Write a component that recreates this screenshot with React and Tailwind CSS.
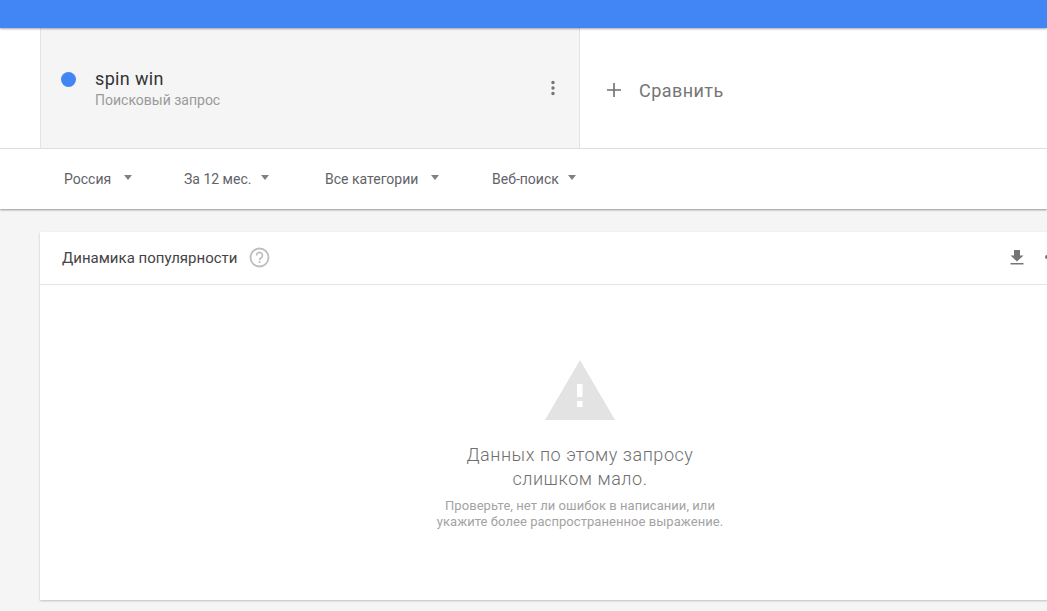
const font = { fontFamily: 'Roboto, "Liberation Sans", sans-serif' };

function Filter({ label, width, margin }) {
  return (
    <button className={`flex items-center justify-between text-[14px] leading-4 text-[#5f6368] ${width} ${margin}`}>
      <span>{label}</span>
      <span className="mr-[1px] mt-[-3px] h-0 w-0 border-x-[4.5px] border-t-[5px] border-x-transparent border-t-[#808080]" />
    </button>
  );
}

export default function App() {
  return (
    <div style={font} className="flex h-[611px] w-[1047px] flex-col overflow-hidden bg-[#f5f5f5]">
      <header className="relative z-20 h-[28px] shrink-0 bg-[#4285f4] shadow-[0_1px_2px_rgba(0,0,0,0.35)]" />

      <section className="flex h-[121px] shrink-0 border-b border-[#e4e4e4] bg-white">
        <div className="ml-10 flex w-[540px] items-start border-x border-[#e4e4e4] bg-[#f5f5f5] pl-[20px] pr-[23px]">
          <span className="mt-[44px] h-[15px] w-[15px] shrink-0 rounded-full bg-[#4285f4]" />
          <div className="ml-[19px] mt-[39px] flex-1">
            <div className="text-[18px] leading-[24px] tracking-[0.35px] text-[#333]">spin win</div>
            <div className="text-[14px] leading-[18px] text-[#9a9a9a]">Поисковый запрос</div>
          </div>
          <svg className="mt-[51px] shrink-0" width="6" height="18" viewBox="0 0 6 18" fill="#757575">
            <circle cx="3" cy="3.500" r="1.700" />
            <circle cx="3" cy="9" r="1.700" />
            <circle cx="3" cy="14.500" r="1.700" />
          </svg>
        </div>
        <div className="flex flex-1 items-center pl-[26px] pt-[4px]">
          <svg width="16" height="16" viewBox="0 0 16 16" stroke="#6f6f6f" strokeWidth="1.600" fill="none">
            <path d="M8 1v14M1 8h14" />
          </svg>
          <span className="ml-[17px] mt-[1px] text-[18px] leading-6 tracking-[0.45px] text-[#757575]">Сравнить</span>
        </div>
      </section>

      <nav className="relative z-10 flex h-[60px] shrink-0 items-center bg-white pb-[1px] pl-[64px] shadow-[0_1px_2px_rgba(0,0,0,0.4)]">
        <Filter label="Россия" width="w-[69px]" margin="" />
        <Filter label="За 12 мес." width="w-[86px]" margin="ml-[51px]" />
        <Filter label="Все категории" width="w-[115px]" margin="ml-[55px]" />
        <Filter label="Веб-поиск" width="w-[85px]" margin="ml-[52px]" />
      </nav>

      <main className="ml-10 mt-[23px] h-[368px] w-[1100px] shrink-0 bg-white shadow-[0_1px_2px_rgba(0,0,0,0.22)]">
        <div className="flex h-[53px] items-center border-b border-[#e4e4e4] pl-[22px]">
          <span className="text-[15px] leading-5 text-[#444]">Динамика популярности</span>
          <svg className="mb-[2px] ml-[12px]" width="21" height="21" viewBox="0 0 21 21" fill="none">
            <circle cx="10.500" cy="10.500" r="9" stroke="#bdbdbd" strokeWidth="1.800" />
            <path d="M7.600 8.400a2.900 2.900 0 1 1 4.600 2.300c-1 .7-1.700 1.200-1.700 2.500" stroke="#bdbdbd" strokeWidth="1.700" />
            <rect x="9.600" y="14.200" width="1.800" height="1.800" fill="#bdbdbd" />
          </svg>
          <svg className="mb-[2px] ml-[739px]" width="16" height="16" viewBox="0 0 16 16" fill="#757575">
            <path d="M5 1h6v5.500h3.500L8 12.500 1.500 6.500H5zM1.500 14h13v1.600h-13z" />
          </svg>
          <svg className="mb-[2px] ml-[14px]" width="16" height="16" viewBox="0 0 16 16" fill="#757575">
            <circle cx="8" cy="8" r="2" />
          </svg>
        </div>
        <div className="flex flex-col items-start pl-[396px] pt-[75px]">
          <div className="flex w-[288px] flex-col items-center text-center">
            <svg width="70" height="60" viewBox="0 0 70 60">
              <path d="M35 0 70 60H0z" fill="#e3e3e3" />
              <rect x="32" y="24" width="5.500" height="13" fill="#fff" />
              <rect x="32" y="41" width="5.500" height="6" fill="#fff" />
            </svg>
            <h2 className="mt-[23px] text-[18px] font-light leading-6 tracking-[0.55px] text-[#6f6f6f]">
              Данных по этому запросу
              <br />
              слишком мало.
            </h2>
            <p className="mt-[7px] whitespace-nowrap text-[13px] leading-4 tracking-[0.05px] text-[#a3a3a3]">
              Проверьте, нет ли ошибок в написании, или
              <br />
              укажите более распространенное выражение.
            </p>
          </div>
        </div>
      </main>
    </div>
  );
}
